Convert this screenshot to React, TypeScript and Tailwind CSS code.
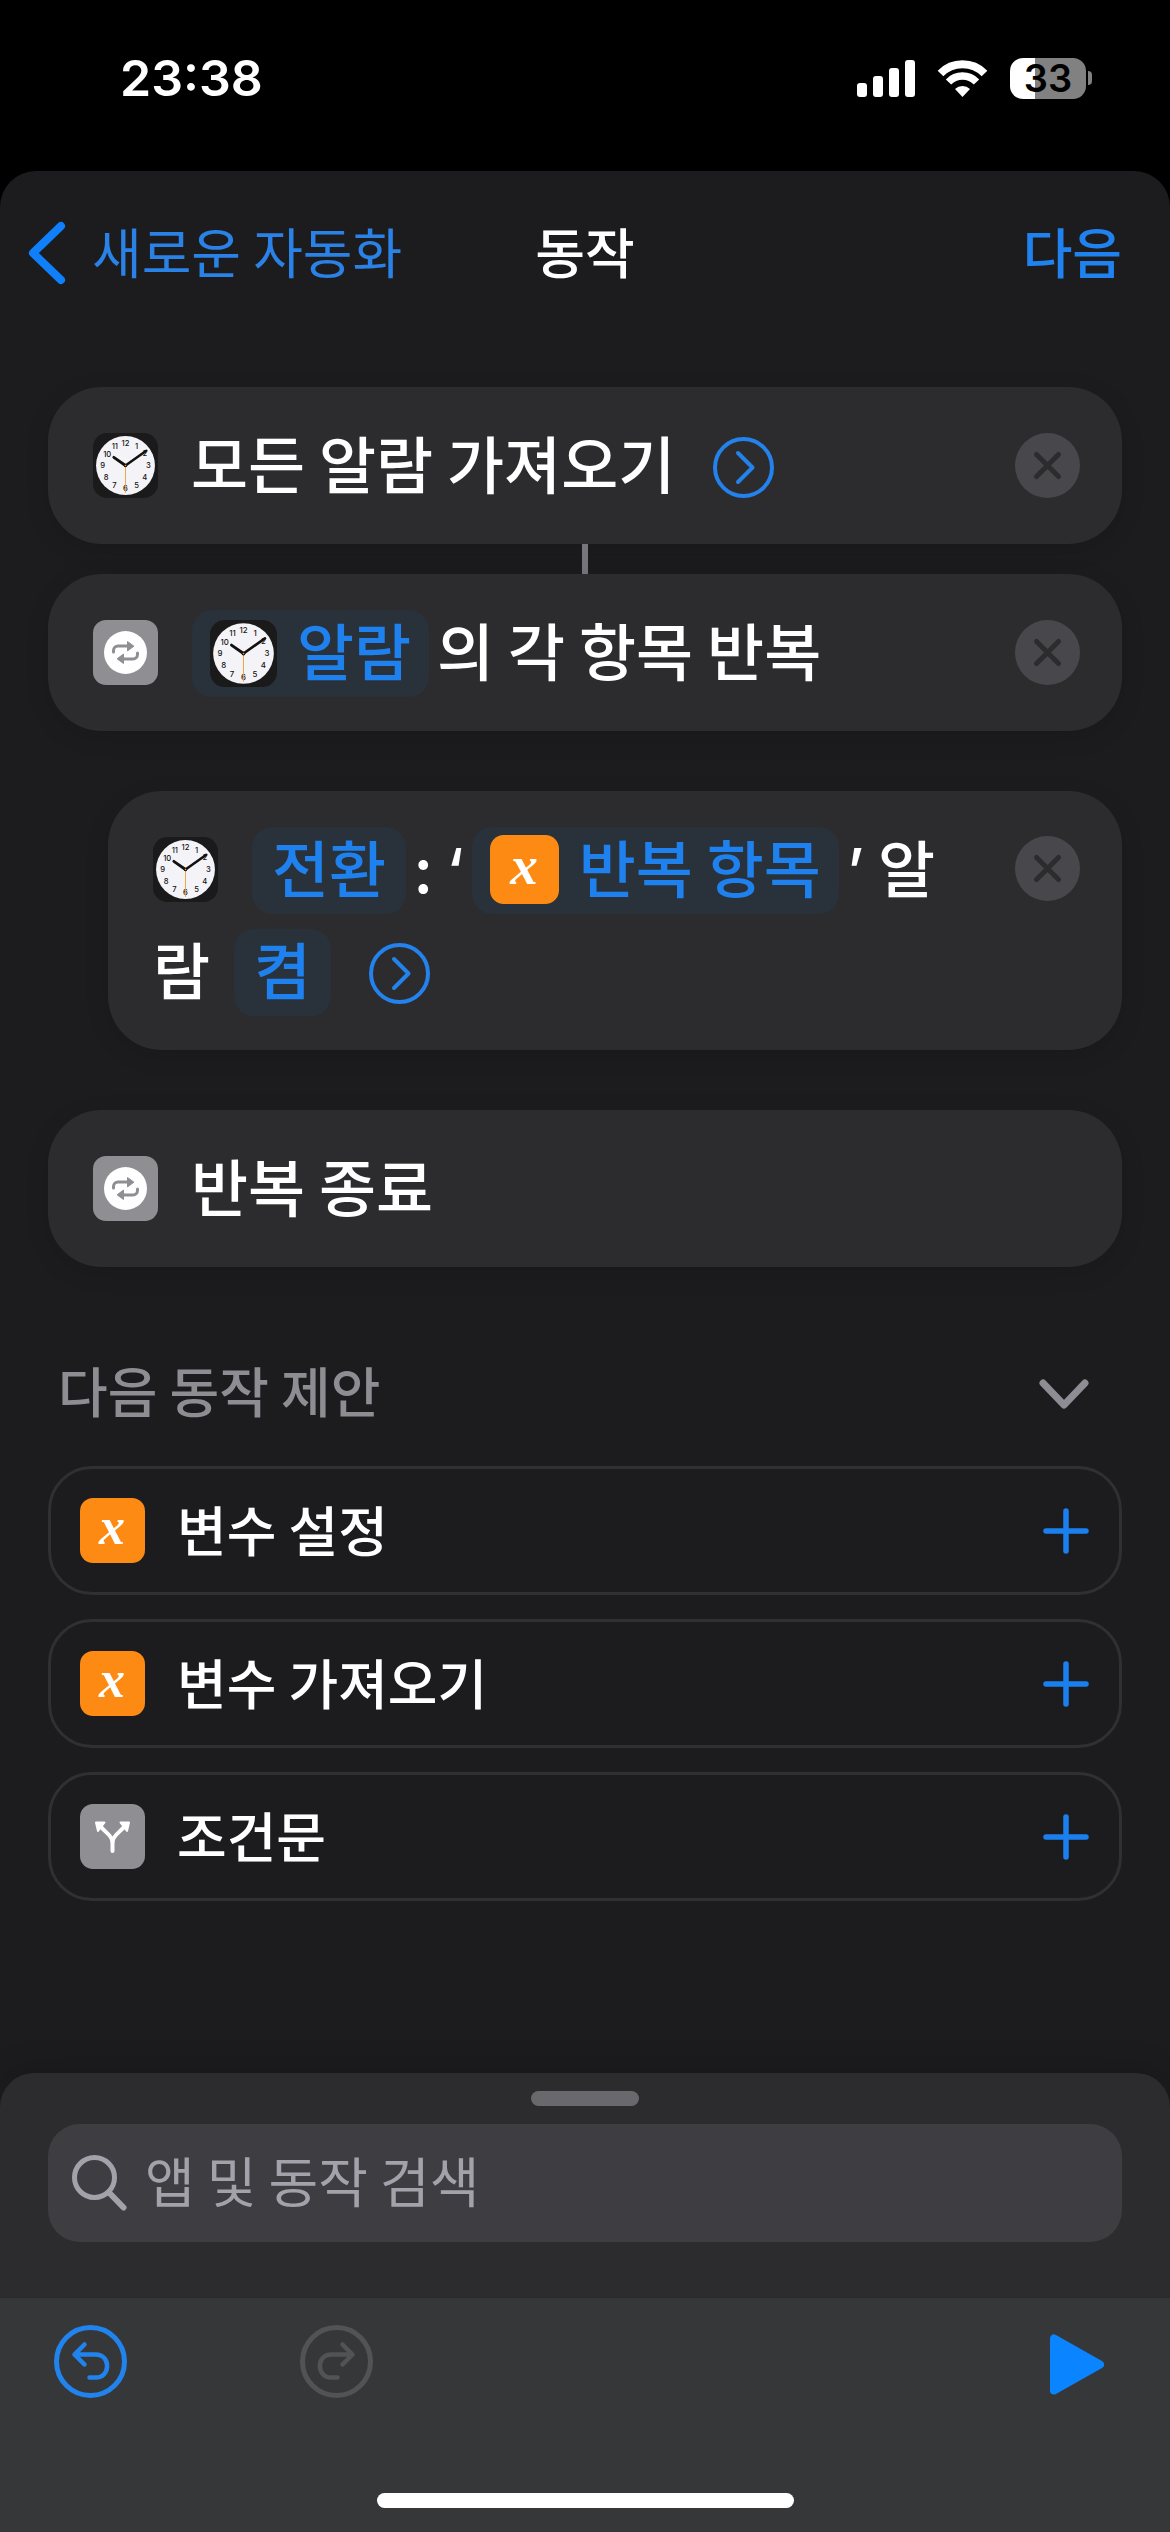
import React from "react";

const KR = "font-['Noto_Sans_CJK_KR',sans-serif]";

function ClockIcon({ className }: { className: string }) {
  const numerals = [
    ["12", 32, 12.5], ["1", 43, 15.5], ["2", 51, 23], ["3", 54.5, 34.5], ["4", 51, 46], ["5", 43, 54],
    ["6", 32, 57.5], ["7", 21, 54], ["8", 13, 46], ["9", 9.5, 34.5], ["10", 14, 23.5], ["11", 21.5, 15.5],
  ] as const;
  return (
    <svg viewBox="0 0 64 64" className={className} aria-hidden="true">
      <rect width="64" height="64" rx="14" fill="#1a1a1b" />
      <circle cx="32" cy="32" r="29" fill="#f4f4f8" />
      {numerals.map(([n, x, y]) => (
        <text key={n} x={x} y={y} textAnchor="middle" fontSize="7.5" fontFamily="Inter, sans-serif" fontWeight="500" fill="#111">
          {n}
        </text>
      ))}
      <path d="M32 32 52.500 17.500" stroke="#111" strokeWidth="2.5" strokeLinecap="round" />
      <path d="M32 32 20.500 24" stroke="#111" strokeWidth="2.8" strokeLinecap="round" />
      <path d="M32 30V59" stroke="#f0a032" strokeWidth="0.9" />
      <circle cx="32" cy="32" r="1.8" fill="#111" />
      <circle cx="32" cy="32" r="0.8" fill="#f0a032" />
    </svg>
  );
}

function RepeatIcon() {
  return (
    <svg viewBox="0 0 65 65" className="size-[65px] shrink-0" aria-hidden="true">
      <rect width="65" height="65" rx="13" fill="#8e8e93" />
      <circle cx="32.500" cy="32.500" r="21.500" fill="#fff" />
      <g stroke="#8e8e93" strokeWidth="3" fill="none" strokeLinecap="round" strokeLinejoin="round">
        <path d="M20.500 32v-1.500a4.500 4.500 0 0 1 4.500-4.500h10" />
        <path d="M44.500 33v1.500a4.500 4.500 0 0 1-4.500 4.500h-10" />
      </g>
      <path d="M34.500 21.500v9.400l6.400-4.700zM30.500 43.500v-9.400l-6.400 4.700z" fill="#8e8e93" stroke="#8e8e93" strokeLinejoin="round" />
    </svg>
  );
}

function VariableIcon({ className }: { className: string }) {
  return (
    <svg viewBox="0 0 65 65" className={`overflow-visible ${className}`} aria-hidden="true">
      <rect width="65" height="65" rx="13" fill="#fd8b13" />
      <text x="32" y="46" textAnchor="middle" fontSize="52" fontFamily="Liberation Serif, serif" fontWeight="700" fontStyle="italic" fill="#fff">
        x
      </text>
    </svg>
  );
}

function BranchIcon({ className }: { className: string }) {
  return (
    <svg viewBox="0 0 65 65" className={className} aria-hidden="true">
      <rect width="65" height="65" rx="13" fill="#8e8e93" />
      <g stroke="#fff" strokeWidth="4" fill="none" strokeLinecap="round">
        <path d="M32.500 47V38C32.500 32 25 28 21 23" />
        <path d="M32.500 38C32.500 32 40 28 44 23" />
      </g>
      <path d="M16 18.500h8.500L18 27zM49 18.500h-8.500L47 27z" fill="#fff" stroke="#fff" strokeWidth="2" strokeLinejoin="round" />
    </svg>
  );
}

function RemoveButton() {
  return (
    <button type="button" aria-label="동작 제거" className="size-[65px] shrink-0">
      <svg viewBox="0 0 65 65" className="size-full">
        <circle cx="32.500" cy="32.500" r="32.500" fill="#48474c" />
        <path d="M21.500 21.500 43.500 43.500M43.500 21.500 21.500 43.500" stroke="#2c2c2e" strokeWidth="5" strokeLinecap="round" />
      </svg>
    </button>
  );
}

function DetailButton() {
  return (
    <button type="button" aria-label="더 보기" className="ml-[38px] inline-block size-[61px] align-[-9px]">
      <svg viewBox="0 0 61 61" className="block size-full" fill="none" stroke="#2382ec" strokeLinecap="round" strokeLinejoin="round">
        <circle cx="30.500" cy="30.500" r="28.500" strokeWidth="4" />
        <path d="M25 16 39.500 30.500 25 45" strokeWidth="4" />
      </svg>
    </button>
  );
}

function Token({ className, children }: { className?: string; children: React.ReactNode }) {
  return (
    <button
      type="button"
      className={`inline-block whitespace-nowrap rounded-[20px] bg-[#29313a] pb-2 align-baseline leading-[79px] text-[#1f81ee] ${className ?? ""}`}
    >
      {children}
    </button>
  );
}

const CARD = "flex rounded-[54px] bg-[#2c2c2e] pr-[42px] pl-[45px] shadow-[0_6px_24px_rgba(0,0,0,0.12)]";
const CARD_TEXT = "flex-1 pt-6 pb-[31px] leading-[102px]";

function Suggestion({ icon, label }: { icon: React.ReactNode; label: string }) {
  return (
    <li>
      <button
        type="button"
        className="flex h-[129px] w-full items-center rounded-[44px] border-[3px] border-[#303032] pr-[30px] pl-[29px] text-left"
      >
        {icon}
        <span className="ml-8 flex-1 pb-1 text-[54px] leading-[80px] font-medium">{label}</span>
        <svg viewBox="0 0 46 46" className="size-[46px]" stroke="#1a80f0" strokeWidth="5.500" strokeLinecap="round" aria-hidden="true">
          <path d="M23 3V43M3 23H43" />
        </svg>
      </button>
    </li>
  );
}

function StatusBar() {
  return (
    <div className="flex h-[171px] items-start justify-between pt-[46px] pr-[78px] pl-[120px] font-['Inter',sans-serif]">
      <time className="text-[50px] leading-[64px] font-semibold">23:38</time>
      <div className="flex h-[64px] items-center gap-[22px]">
        <svg viewBox="0 0 58 37" className="h-[37px] w-[58px]" fill="#fff" aria-label="신호 세기">
          <rect x="0" y="23" width="10" height="14" rx="3" />
          <rect x="16" y="16" width="10" height="21" rx="3" />
          <rect x="32" y="8" width="10" height="29" rx="3" />
          <rect x="48" y="0" width="10" height="37" rx="3" />
        </svg>
        <svg viewBox="0 0 51 37" className="h-[37px] w-[51px]" aria-label="Wi-Fi" fill="none" stroke="#fff">
          <path d="M3.500 13.500a31 31 0 0 1 44 0" strokeWidth="8" />
          <path d="M11.500 22a19.500 19.500 0 0 1 28 0" strokeWidth="7.500" />
          <path d="M25.500 37l-7.500-8a11 11 0 0 1 15 0z" fill="#fff" stroke="none" />
        </svg>
        <div className="flex items-center gap-[2px]" aria-label="배터리 33%">
          <div className="flex h-[41px] w-[76px] items-center justify-center rounded-[13px] bg-[linear-gradient(to_right,#fff_33%,#818181_33%)] text-[38px] leading-[41px] font-semibold text-black">
            33
          </div>
          <div className="h-[14px] w-[4px] rounded-r-full bg-[#818181]" />
        </div>
      </div>
    </div>
  );
}

export default function App() {
  return (
    <div className={`flex min-h-screen flex-col bg-black text-white ${KR}`}>
      <StatusBar />
      <main className="flex flex-1 flex-col rounded-t-[36px] bg-[#1c1c1e]">
        <header className="grid grid-cols-[1fr_auto_1fr] items-center px-7 pt-10 text-[54px] leading-[80px]">
          <button type="button" className="flex items-center gap-[26px] text-[#2a81e6]">
            <svg viewBox="0 0 38 64" className="h-16 w-[38px]" fill="none" stroke="#0f80fa" strokeWidth="8" strokeLinecap="round" strokeLinejoin="round" aria-hidden="true">
              <path d="M33 5 5 32 33 59" />
            </svg>
            <span className="pb-1">새로운 자동화</span>
          </button>
          <h1 className="pb-1 font-medium">동작</h1>
          <button type="button" className="mr-5 justify-self-end pb-1 font-medium text-[#2082ef]">
            다음
          </button>
        </header>

        <section className="px-12 pt-[92px] text-[62px] font-medium">
          <article className={`${CARD} items-center`}>
            <ClockIcon className="size-[65px] shrink-0" />
            <p className={`${CARD_TEXT} pl-[33px]`}>
              모든 알람 가져오기
              <DetailButton />
            </p>
            <RemoveButton />
          </article>
          <div className="mx-auto h-[30px] w-[6px] bg-[#77767e]" />
          <article className={`${CARD} items-center`}>
            <RepeatIcon />
            <p className={`${CARD_TEXT} pl-[34px]`}>
              <Token className="px-[18px]">
                <ClockIcon className="mr-5 inline-block size-[67px] align-[-11px]" />
                알람
              </Token>
              <span className="ml-2">의 각 항목 반복</span>
            </p>
            <RemoveButton />
          </article>

          <article className={`${CARD} mt-[60px] ml-[60px] items-start`}>
            <p className={`${CARD_TEXT} pr-12`}>
              <ClockIcon className="mr-[34px] inline-block size-[65px] align-[-9px]" />
              <Token className="px-5">전환</Token>
              <span className="ml-2">:</span> <span className="mr-2 font-['Inter'] leading-none">‘</span>
              <Token className="px-[18px]">
                <VariableIcon className="mr-5 inline-block size-[69px] align-[-11px]" />
                반복 항목
              </Token>
              <span className="ml-2 font-['Inter'] leading-none">’</span> 알람
              <Token className="ml-6 px-5">켬</Token>
              <DetailButton />
            </p>
            <div className="flex pt-[45px]">
              <RemoveButton />
            </div>
          </article>

          <article className={`${CARD} mt-[60px] items-center`}>
            <RepeatIcon />
            <p className={`${CARD_TEXT} pl-[33px]`}>반복 종료</p>
          </article>
        </section>

        <section className="px-12 pt-[83px]">
          <button type="button" className="flex w-full items-center justify-between pr-8 pl-[10px] text-[54px] leading-[80px] font-medium text-[#8e8d93]">
            다음 동작 제안
            <svg viewBox="0 0 52 32" className="mt-2 h-8 w-[52px]" fill="none" stroke="#8e8d93" strokeWidth="7" strokeLinecap="round" strokeLinejoin="round" aria-hidden="true">
              <path d="M5 5 26 27 47 5" />
            </svg>
          </button>
          <ul className="mt-9 flex flex-col gap-6">
            <Suggestion icon={<VariableIcon className="size-[65px]" />} label="변수 설정" />
            <Suggestion icon={<VariableIcon className="size-[65px]" />} label="변수 가져오기" />
            <Suggestion icon={<BranchIcon className="size-[65px]" />} label="조건문" />
          </ul>
        </section>

        <footer className="mt-auto rounded-t-[34px] bg-[#2c2c2e] shadow-[0_-6px_30px_rgba(0,0,0,0.15)]">
          <div className="px-12 pt-[18px] pb-[55px]">
            <div className="mx-auto h-[15px] w-[108px] rounded-full bg-[#69686d]" />
            <label className="mt-[18px] flex h-[118px] items-center gap-[18px] rounded-[32px] bg-[#3e3d42] pl-6">
              <svg viewBox="0 0 55 56" className="h-14 w-[55px] shrink-0" fill="none" stroke="#a3a2aa" strokeLinecap="round" aria-hidden="true">
                <circle cx="22.500" cy="22.500" r="20" strokeWidth="5" />
                <path d="M37.500 38 51.500 52.500" strokeWidth="6" />
              </svg>
              <input
                type="search"
                aria-label="앱 및 동작 검색"
                placeholder="앱 및 동작 검색"
                className="min-w-0 flex-1 bg-transparent pb-1.5 text-[54px] leading-[80px] outline-none placeholder:text-[#a3a2aa]"
              />
            </label>
          </div>
          <div className="border-t border-[#2a2a2b] bg-[#363738] pb-6">
            <nav className="flex items-start pt-[27px] pr-[66px] pl-[54px]">
              <button type="button" aria-label="실행 취소" className="size-[73px]">
                <svg viewBox="0 0 73 73" className="size-full" fill="none" stroke="#2183ee" strokeWidth="4.500" strokeLinecap="round" strokeLinejoin="round">
                  <circle cx="36.500" cy="36.500" r="34" strokeWidth="5" />
                  <path d="M30.500 19.500 20.500 29.500 30.500 39.500M20.500 29.500H41.500C57 29.500 57 52.500 41.500 52.500H35.500" />
                </svg>
              </button>
              <button type="button" disabled aria-label="다시 실행" className="ml-[173px] size-[73px]">
                <svg viewBox="0 0 73 73" className="size-full" fill="none" stroke="#525355" strokeWidth="4.500" strokeLinecap="round" strokeLinejoin="round">
                  <circle cx="36.500" cy="36.500" r="34" strokeWidth="5" />
                  <path d="M42.500 19.500 52.500 29.500 42.500 39.500M52.500 29.500H31.500C16 29.500 16 52.500 31.500 52.500H37.500" />
                </svg>
              </button>
              <button type="button" aria-label="실행" className="ml-auto pt-[9px]">
                <svg viewBox="0 0 54 61" className="h-[61px] w-[54px]" fill="#0a84ff" stroke="#0a84ff" strokeWidth="8" strokeLinejoin="round">
                  <path d="M4 4.500V56.500L50 30.500z" />
                </svg>
              </button>
            </nav>
            <div className="mx-auto mt-[95px] h-[15px] w-[417px] rounded-full bg-white" />
          </div>
        </footer>
      </main>
    </div>
  );
}
